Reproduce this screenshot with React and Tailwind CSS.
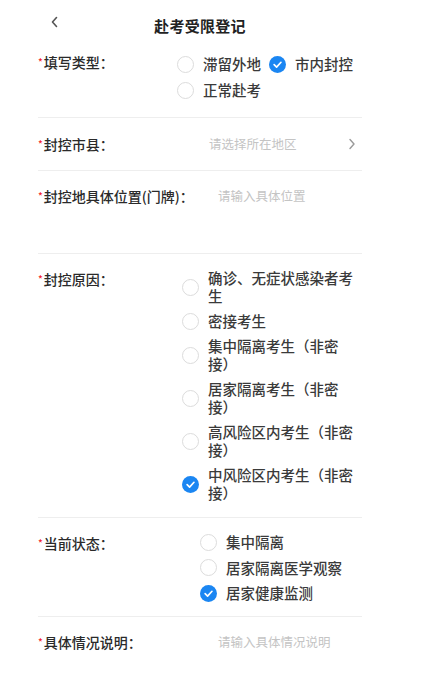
import React from 'react';

const font = { fontFamily: '"Noto Sans CJK SC", "Noto Sans", sans-serif' };

function Radio({ checked, children }) {
  return (
    <div className="flex items-center gap-[9px]">
      {checked ? (
        <span className="w-[17px] h-[17px] shrink-0 rounded-full bg-[#1b86f2] flex items-center justify-center">
          <svg width="11" height="11" viewBox="0 0 12 12" fill="none">
            <path d="M2.3 6.2 L5 8.8 L9.8 3.6" stroke="#fff" strokeWidth="1.8" strokeLinecap="round" strokeLinejoin="round" />
          </svg>
        </span>
      ) : (
        <span className="w-[17px] h-[17px] shrink-0 rounded-full border-[1.5px] border-[#dcdcdc] bg-white"></span>
      )}
      <span className="text-[14.5px] leading-[18px] font-medium text-[#3a3a3a]">{children}</span>
    </div>
  );
}

function Label({ children, className = '' }) {
  return (
    <div className={`shrink-0 text-[14px] leading-[20px] font-medium text-[#2a2a2a] flex ${className}`}>
      <span className="text-[#f5222d] text-[10px] leading-[20px] mr-[1px]">*</span>
      <span>{children}：</span>
    </div>
  );
}

export default function App() {
  const reasons = [
    { text: '确诊、无症状感染者考生' },
    { text: '密接考生' },
    { text: '集中隔离考生（非密接）' },
    { text: '居家隔离考生（非密接）' },
    { text: '高风险区内考生（非密接）' },
    { text: '中风险区内考生（非密接）', checked: true },
  ];
  const states = [
    { text: '集中隔离' },
    { text: '居家隔离医学观察' },
    { text: '居家健康监测', checked: true },
  ];

  return (
    <div className="min-h-screen bg-white" style={font}>
      <div className="w-[400px] px-[38px]">
        {/* Header */}
        <div className="relative h-[46px] flex items-center justify-center pt-[6px]">
          <svg className="absolute left-[12px] top-[16px]" width="10" height="12" viewBox="0 0 10 12" fill="none">
            <path d="M6.5 1.5 L2.5 6 L6.5 10.5" stroke="#555" strokeWidth="1.6" strokeLinecap="round" strokeLinejoin="round" />
          </svg>
          <h1 className="text-[15px] font-bold text-[#222] tracking-[0.3px]">赴考受限登记</h1>
        </div>

        {/* 填写类型 */}
        <div className="flex pt-[6px] pb-[18px] border-b border-[#eeeeee]">
          <Label className="w-[139px]">填写类型</Label>
          <div className="flex flex-wrap gap-x-[8px] gap-y-[8px] pt-[3px] w-[185px]">
            <Radio>滞留外地</Radio>
            <Radio checked>市内封控</Radio>
            <Radio>正常赴考</Radio>
          </div>
        </div>

        {/* 封控市县 */}
        <div className="flex items-center py-[16px] border-b border-[#eeeeee]">
          <Label className="w-[171px]">封控市县</Label>
          <span className="flex-1 text-[12.5px] leading-[20px] text-[#c4c4c4]">请选择所在地区</span>
          <svg className="mr-[6px]" width="8" height="12" viewBox="0 0 8 12" fill="none">
            <path d="M2 1.5 L6 6 L2 10.5" stroke="#9a9a9a" strokeWidth="1.4" strokeLinecap="round" strokeLinejoin="round" />
          </svg>
        </div>

        {/* 封控地具体位置 */}
        <div className="flex h-[83px] pt-[15px] border-b border-[#eeeeee]">
          <Label className="w-[180px]">封控地具体位置(门牌)</Label>
          <span className="text-[12.5px] leading-[20px] text-[#c4c4c4]">请输入具体位置</span>
        </div>

        {/* 封控原因 */}
        <div className="flex pt-[15px] pb-[15px] border-b border-[#eeeeee]">
          <Label className="w-[144px]">封控原因</Label>
          <div className="flex flex-col gap-[7px] w-[175px]">
            {reasons.map((r) => (
              <Radio key={r.text} checked={r.checked}>{r.text}</Radio>
            ))}
          </div>
        </div>

        {/* 当前状态 */}
        <div className="flex pt-[15px] pb-[14px] border-b border-[#eeeeee]">
          <Label className="w-[162px]">当前状态</Label>
          <div className="flex flex-col gap-[7.5px]">
            {states.map((s) => (
              <Radio key={s.text} checked={s.checked}>{s.text}</Radio>
            ))}
          </div>
        </div>

        {/* 具体情况说明 */}
        <div className="flex pt-[15px] pb-[16px]">
          <Label className="w-[180px]">具体情况说明</Label>
          <span className="text-[12.5px] leading-[20px] text-[#c4c4c4]">请输入具体情况说明</span>
        </div>
      </div>
    </div>
  );
}
